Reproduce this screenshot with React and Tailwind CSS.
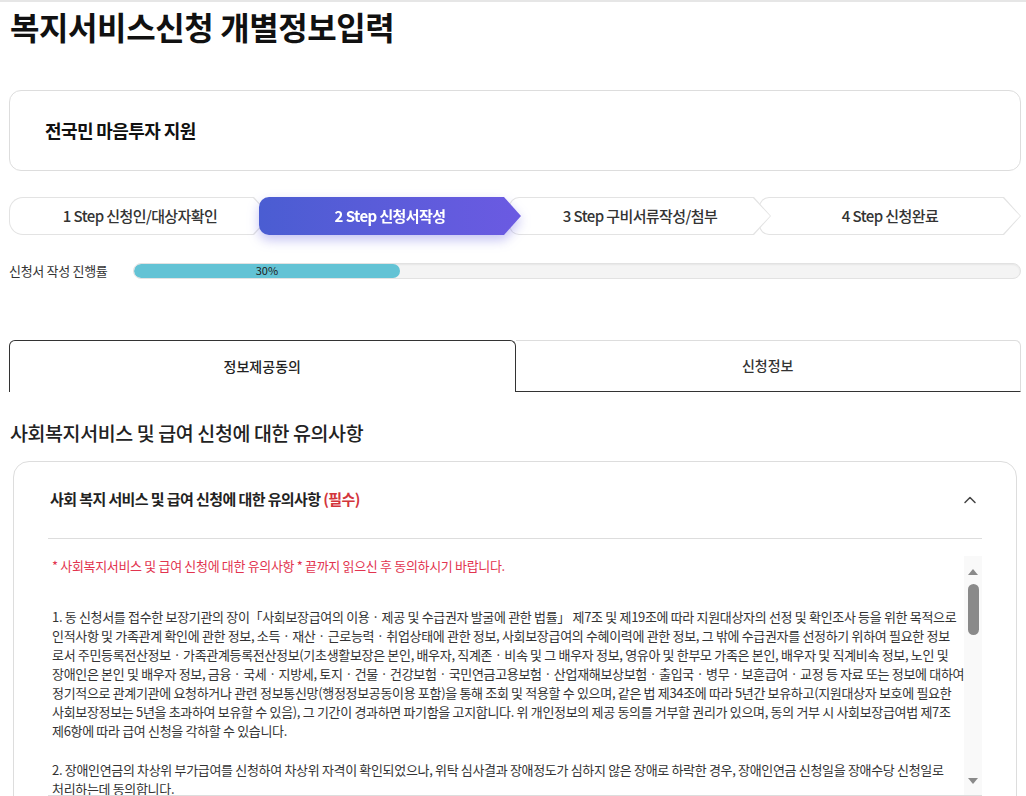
import { ChevronUp } from 'lucide-react';

const font = { fontFamily: '"Noto Sans CJK KR", "Noto Sans", sans-serif' };

const steps = [
  { no: 1, label: '신청인/대상자확인' },
  { no: 2, label: '신청서작성', active: true },
  { no: 3, label: '구비서류작성/첨부' },
  { no: 4, label: '신청완료' },
];

const zIndex = ['z-20', 'z-30', 'z-10', 'z-0'];

const paragraph1 = [
  '1. 동 신청서를 접수한 보장기관의 장이「사회보장급여의 이용 · 제공 및 수급권자 발굴에 관한 법률」 제7조 및 제19조에 따라 지원대상자의 선정 및 확인조사 등을 위한 목적으로',
  '인적사항 및 가족관계 확인에 관한 정보, 소득 · 재산 · 근로능력 · 취업상태에 관한 정보, 사회보장급여의 수혜이력에 관한 정보, 그 밖에 수급권자를 선정하기 위하여 필요한 정보',
  '로서 주민등록전산정보 · 가족관계등록전산정보(기초생활보장은 본인, 배우자, 직계존 · 비속 및 그 배우자 정보, 영유아 및 한부모 가족은 본인, 배우자 및 직계비속 정보, 노인 및',
  '장애인은 본인 및 배우자 정보, 금융 · 국세 · 지방세, 토지 · 건물 · 건강보험 · 국민연금고용보험 · 산업재해보상보험 · 출입국 · 병무 · 보훈급여 · 교정 등 자료 또는 정보에 대하여',
  '정기적으로 관계기관에 요청하거나 관련 정보통신망(행정정보공동이용 포함)을 통해 조회 및 적용할 수 있으며, 같은 법 제34조에 따라 5년간 보유하고(지원대상자 보호에 필요한',
  '사회보장정보는 5년을 초과하여 보유할 수 있음), 그 기간이 경과하면 파기함을 고지합니다. 위 개인정보의 제공 동의를 거부할 권리가 있으며, 동의 거부 시 사회보장급여법 제7조',
  '제6항에 따라 급여 신청을 각하할 수 있습니다.',
];

const paragraph2 = [
  '2. 장애인연금의 차상위 부가급여를 신청하여 차상위 자격이 확인되었으나, 위탁 심사결과 장애정도가 심하지 않은 장애로 하락한 경우, 장애인연금 신청일을 장애수당 신청일로',
  '처리하는데 동의합니다.',
];

function Step({ step, index }) {
  const shape =
    '[clip-path:polygon(0_0,calc(100%_-_17px)_0,100%_50%,calc(100%_-_17px)_100%,0_100%)]';
  if (step.active) {
    return (
      <div className={`relative ${zIndex[index]} -ml-[12px] w-[264px] drop-shadow-[0_5px_6px_rgba(90,84,220,0.35)]`}>
        <div
          className={`flex h-[38px] items-center justify-center rounded-l-[10px] bg-gradient-to-r from-[#4a5dd2] to-[#6b5ae2] text-[15px] font-bold tracking-[-0.6px] text-white ${shape}`}
        >
          {step.no} Step {step.label}
        </div>
      </div>
    );
  }
  return (
    <div
      className={`relative ${zIndex[index]} ${index === 0 ? 'rounded-l-[14px]' : '-ml-[12px] rounded-l-[10px]'} h-[38px] w-[264px] bg-[#e3e3e3] p-px ${shape}`}
    >
      <div
        className={`flex h-full items-center justify-center ${index === 0 ? 'rounded-l-[13px]' : 'rounded-l-[9px]'} bg-white text-[15px] font-medium tracking-[-0.6px] text-[#333] ${shape}`}
      >
        {step.no} Step {step.label}
      </div>
    </div>
  );
}

export default function App() {
  return (
    <div className="min-h-screen border-t-2 border-[#e6e6e6] bg-white text-[#222]" style={font}>
      <main className="pl-[9px] pr-[5px] pb-10">
        <h1 className="pl-px pt-[3px] text-[32px] font-bold leading-[42px] tracking-[-0.4px] text-[#111]">
          복지서비스신청 개별정보입력
        </h1>

        <section className="mt-[43px] flex h-[81px] items-center rounded-[12px] border border-[#dddddd] px-[35px]">
          <h2 className="text-[18px] font-bold tracking-[-0.6px] text-[#111]">전국민 마음투자 지원</h2>
        </section>

        <nav className="mt-[26px] flex">
          {steps.map((step, i) => (
            <Step key={step.no} step={step} index={i} />
          ))}
        </nav>

        <div className="mt-[26px] flex items-center">
          <span className="w-[124px] text-[13px] tracking-[-0.3px] text-[#333]">신청서 작성 진행률</span>
          <div className="h-[16px] flex-1 overflow-hidden rounded-full border border-[#e2e2e2] bg-[#f4f4f4] shadow-[inset_0_1px_2px_rgba(0,0,0,0.06)]">
            <div
              className="flex h-full items-center justify-center rounded-full bg-[#63c3d5] text-[11px] leading-none text-[#222]"
              style={{ width: '30%' }}
            >
              30%
            </div>
          </div>
        </div>

        <div className="mt-[59px] flex h-[52px]">
          <button className="flex-1 rounded-t-[6px] border border-b-0 border-[#333] text-[14px] font-medium text-[#222]">
            정보제공동의
          </button>
          <button className="flex-1 rounded-tr-[6px] border-b border-r border-t border-b-[#333] border-r-[#dddddd] border-t-[#dddddd] text-[14px] font-medium text-[#333]">
            신청정보
          </button>
        </div>

        <h3 className="mt-[27px] pl-px text-[19.5px] font-medium leading-[28px] tracking-[-0.4px] text-[#222]">
          사회복지서비스 및 급여 신청에 대한 유의사항
        </h3>

        <section className="mx-[4px] mt-[14px] rounded-[16px] border border-[#dddddd] px-[34px] pb-8">
          <div className="flex h-[77px] items-center justify-between border-b border-[#dddddd] pl-[2px]">
            <h4 className="text-[15px] font-bold tracking-[-0.6px] text-[#222]">
              사회 복지 서비스 및 급여 신청에 대한 유의사항 <span className="text-[#d3353b]">(필수)</span>
            </h4>
            <ChevronUp size={20} strokeWidth={1.8} className="mr-[2px] text-[#444]" />
          </div>

          <div className="mt-[17px] flex h-[240px] border-b border-[#dddddd]">
            <div className="flex-1 overflow-hidden pl-[4px] text-[13px] leading-[19px] tracking-[-0.33px] text-[#333]">
              <p className="text-[#e2344f]">* 사회복지서비스 및 급여 신청에 대한 유의사항 * 끝까지 읽으신 후 동의하시기 바랍니다.</p>
              <p className="mt-[32px]">
                {paragraph1.map((line) => (
                  <span key={line} className="block whitespace-nowrap">{line}</span>
                ))}
              </p>
              <p className="mt-[20px]">
                {paragraph2.map((line) => (
                  <span key={line} className="block whitespace-nowrap">{line}</span>
                ))}
              </p>
            </div>
            <div className="flex w-[18px] flex-col items-center bg-[#f9f9f9] pt-[12px]">
              <svg width="12" height="8" viewBox="0 0 12 8">
                <path d="M6 1 L11 7 L1 7 Z" fill="#8a8a8a" />
              </svg>
              <div className="mt-[8px] h-[51px] w-[11px] rounded-full bg-[#8a8a8a]" />
              <div className="flex-1" />
              <svg width="12" height="8" viewBox="0 0 12 8" className="mb-[10px]">
                <path d="M1 1 L11 1 L6 7 Z" fill="#8a8a8a" />
              </svg>
            </div>
          </div>
        </section>
      </main>
    </div>
  );
}
